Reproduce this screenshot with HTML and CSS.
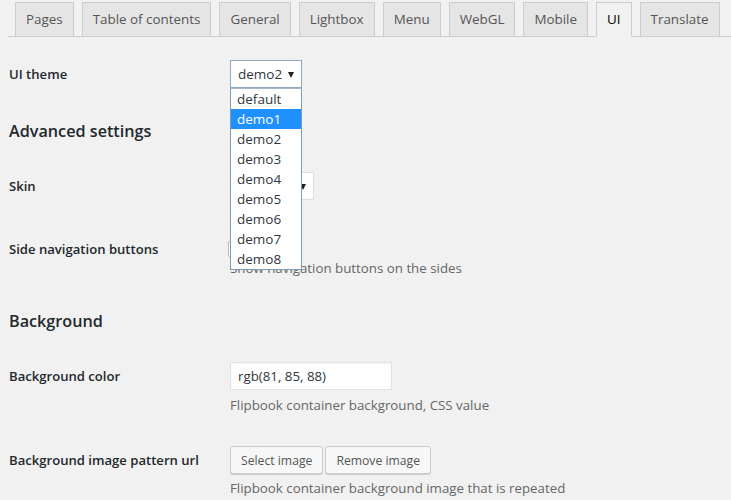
FILE: index.html
```html
<!DOCTYPE html>
<html>
<head>
<meta charset="utf-8">
<link rel="stylesheet" href="styles.css">
</head>
<body>
<nav class="tabs">
  <a class="tab">Pages</a>
  <a class="tab">Table of contents</a>
  <a class="tab">General</a>
  <a class="tab">Lightbox</a>
  <a class="tab">Menu</a>
  <a class="tab">WebGL</a>
  <a class="tab">Mobile</a>
  <a class="tab active">UI</a>
  <a class="tab">Translate</a>
</nav>
<main class="form">
  <div class="row">
    <div class="label">UI theme</div>
    <div class="control">
      <div class="select focused w72"><span>demo2</span><span class="arrow"></span></div>
    </div>
  </div>
  <h2 class="heading">Advanced settings</h2>
  <div class="row gap29">
    <div class="label">Skin</div>
    <div class="control">
      <div class="select w84"><span>demo2</span><span class="arrow"></span></div>
    </div>
  </div>
  <div class="row gap35">
    <div class="label">Side navigation buttons</div>
    <div class="control">
      <div class="checkbox"></div>
      <p class="desc first">Show navigation buttons on the sides</p>
    </div>
  </div>
  <h2 class="heading">Background</h2>
  <div class="row gap29">
    <div class="label">Background color</div>
    <div class="control">
      <div class="text-input">rgb(81, 85, 88)</div>
      <p class="desc">Flipbook container background, CSS value</p>
    </div>
  </div>
  <div class="row gap31">
    <div class="label">Background image pattern url</div>
    <div class="control">
      <div class="buttons">
        <button class="btn">Select image</button>
        <button class="btn">Remove image</button>
      </div>
      <p class="desc">Flipbook container background image that is repeated</p>
    </div>
  </div>
</main>
<ul class="dropdown">
  <li>default</li>
  <li class="hl">demo1</li>
  <li>demo2</li>
  <li>demo3</li>
  <li>demo4</li>
  <li>demo5</li>
  <li>demo6</li>
  <li>demo7</li>
  <li>demo8</li>
</ul>
</body>
</html>
```
FILE: styles.css
```css
html, body {
  margin: 0;
  padding: 0;
  background: #f1f1f1;
}
body {
  font-family: "Open Sans", "Noto Sans", sans-serif;
  font-size: 13px;
  color: #23282d;
  position: relative;
  width: 731px;
  height: 500px;
  overflow: hidden;
}
.tabs {
  display: flex;
  margin-left: 8px;
  padding-top: 2px;
  padding-left: 7px;
  border-bottom: 1px solid #ccc;
  height: 34px;
}
.tab {
  display: block;
  flex-shrink: 0;
  white-space: nowrap;
  box-sizing: border-box;
  height: 35px;
  margin-right: 8px;
  padding: 0 10px;
  line-height: 33px;
  border: 1px solid #ccc;
  background: #e5e5e5;
  color: #555;
  font-size: 13.4px;
}
.tab.active {
  background: #f1f1f1;
  border-bottom-color: #f1f1f1;
  color: #000;
}
.form {
  padding: 23px 0 0 9px;
}
.row {
  display: grid;
  grid-template-columns: 221px 1fr;
}
.gap29 { margin-top: 29px; }
.gap31 { margin-top: 31px; }
.gap35 { margin-top: 35px; }
.label {
  font-weight: 600;
  line-height: 28px;
  font-size: 13.1px;
}
.control {
  display: flex;
  flex-direction: column;
  align-items: flex-start;
}
.select {
  box-sizing: border-box;
  height: 28px;
  background: #fff;
  border: 1px solid #ddd;
  display: flex;
  align-items: center;
  justify-content: space-between;
  padding: 0 7px 0 7px;
  font-size: 13.5px;
  color: #32373c;
}
.select.focused { border-color: #8fa9c2; }
.w72 { width: 72px; }
.w84 { width: 84px; }
.arrow {
  width: 0;
  height: 0;
  border-left: 3px solid transparent;
  border-right: 3px solid transparent;
  border-top: 6px solid #222;
  margin-top: 1px;
}
.heading {
  margin: 31px 0 0;
  font-size: 16.2px;
  line-height: 24px;
  font-weight: 600;
  color: #23282d;
}
.checkbox {
  box-sizing: border-box;
  width: 16px;
  height: 16px;
  margin-top: 6px;
  margin-left: -2px;
  background: #fff;
  border: 1px solid #b4b9be;
  border-radius: 2px;
}
.desc {
  margin: 5px 0 0;
  line-height: 20px;
  color: #666;
  font-size: 13.3px;
}
.desc.first { margin-top: 1px; }
.text-input {
  box-sizing: border-box;
  width: 162px;
  height: 28px;
  background: #fff;
  border: 1px solid #e2e2e2;
  box-shadow: inset 0 1px 2px rgba(0,0,0,.05);
  padding: 0 7px;
  line-height: 26px;
  font-size: 13.3px;
  color: #32373c;
}
.buttons {
  display: flex;
  gap: 2px;
}
.buttons + .desc { margin-top: 4px; }
.btn {
  box-sizing: border-box;
  margin: 0;
  height: 28px;
  padding: 0 10px;
  font-family: inherit;
  font-size: 12.2px;
  color: #555;
  background: #f7f7f7;
  border: 1px solid #ccc;
  border-radius: 3px;
  box-shadow: 0 1px 0 #ccc;
}
.dropdown {
  position: absolute;
  left: 230px;
  top: 88px;
  width: 72px;
  box-sizing: border-box;
  margin: 0;
  padding: 0;
  list-style: none;
  background: #fff;
  border: 1px solid #7f9db9;
  border-top-color: #a9b8c8;
}
.dropdown li {
  height: 20px;
  line-height: 20px;
  padding-left: 6px;
  font-size: 13.5px;
  color: #32373c;
}
.dropdown li.hl {
  background: #1e90ff;
  color: #fff;
}
```
